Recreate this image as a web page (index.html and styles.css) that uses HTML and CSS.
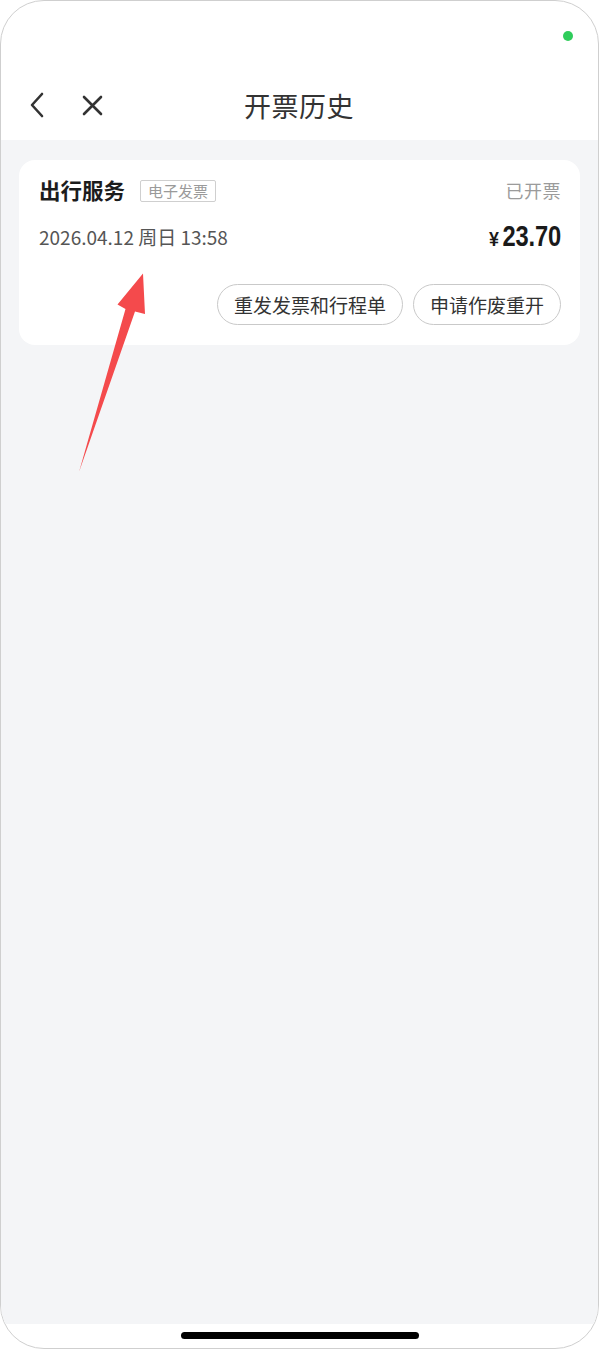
FILE: index.html
```html
<!DOCTYPE html>
<html lang="zh-CN">
<head>
<meta charset="utf-8">
<title>开票历史</title>
<link rel="stylesheet" href="styles.css">
</head>
<body>
<div class="phone">
  <div class="status-bar">
    <span class="dot"></span>
  </div>
  <div class="nav-bar">
    <div class="nav-left">
      <svg class="icon" width="20" height="28" viewBox="0 0 20 28"><path d="M15 3 L5 14 L15 25" fill="none" stroke="#333" stroke-width="2.6" stroke-linecap="round" stroke-linejoin="round"/></svg>
      <svg class="icon close" width="21" height="21" viewBox="0 0 21 21"><path d="M2 2 L19 19 M19 2 L2 19" fill="none" stroke="#333" stroke-width="2.6" stroke-linecap="round"/></svg>
    </div>
    <div class="nav-title">开票历史</div>
  </div>
  <main class="content">
    <section class="card">
      <div class="row row-top">
        <div class="title-wrap">
          <span class="card-title">出行服务</span>
          <span class="tag">电子发票</span>
        </div>
        <span class="status">已开票</span>
      </div>
      <div class="row row-mid">
        <span class="date">2026.04.12 周日 13:58</span>
        <span class="price"><span class="yen">¥</span><span class="amount">23.70</span></span>
      </div>
      <div class="actions">
        <button class="pill">重发发票和行程单</button>
        <button class="pill">申请作废重开</button>
      </div>
    </section>
  </main>
  <div class="home-area"><span class="home-bar"></span></div>
  <svg class="arrow" width="600" height="500" viewBox="0 0 600 500">
    <polygon points="78,471 124.5,308 116.5,303.5 142,272.5 144,313 134,310.5" fill="#f44a4c"/>
  </svg>
</div>
</body>
</html>
```
FILE: styles.css
```css
* { box-sizing: border-box; }
html, body {
  margin: 0;
  padding: 0;
  background: #ffffff;
}
body {
  font-family: "Noto Sans CJK SC", "Noto Sans", sans-serif;
  color: #222;
}
.phone {
  position: relative;
  width: 599px;
  height: 1349px;
  border: 1px solid #cfcfcf;
  border-radius: 44px;
  overflow: hidden;
  background: #fff;
  display: flex;
  flex-direction: column;
}
.status-bar {
  height: 69px;
  display: flex;
  justify-content: flex-end;
  padding: 30px 25px 0 0;
}
.dot {
  width: 10px;
  height: 10px;
  border-radius: 50%;
  background: #2fcc5b;
}
.nav-bar {
  height: 70px;
  display: flex;
  align-items: center;
  justify-content: center;
  position: relative;
}
.nav-left {
  position: absolute;
  left: 26px;
  top: 0;
  height: 70px;
  display: flex;
  align-items: center;
  gap: 35px;
}
.icon { display: block; }
.close { margin-top: 1px; }
.nav-title {
  font-size: 27px;
  color: #333;
  letter-spacing: 0.5px;
  line-height: 1;
  margin-right: 1px;
}
.content {
  flex: 1;
  background: #f4f5f7;
  padding: 20px 18px 0 18px;
}
.card {
  background: #fff;
  border-radius: 16px;
  padding: 16px 19px 20px 20px;
}
.row {
  display: flex;
  justify-content: space-between;
  align-items: center;
}
.row-top { height: 28px; }
.title-wrap {
  display: flex;
  align-items: center;
  gap: 15px;
}
.card-title {
  font-size: 21.5px;
  font-weight: 700;
  color: #1c1c1c;
  line-height: 28px;
}
.tag {
  font-size: 15px;
  color: #9a9a9a;
  border: 1px solid #cfcfcf;
  border-radius: 2px;
  padding: 0 7px;
  height: 22px;
  display: flex;
  align-items: center;
  margin-top: 1px;
}
.status {
  font-size: 18px;
  color: #9b9b9b;
  line-height: 28px;
  letter-spacing: 0.5px;
}
.row-mid {
  margin-top: 14px;
  height: 36px;
}
.date {
  font-size: 19px;
  color: #555;
}
.price {
  display: flex;
  align-items: baseline;
  color: #1a1a1a;
  font-weight: 700;
}
.yen {
  font-family: "Liberation Sans", sans-serif;
  font-size: 21px;
  display: inline-block;
  transform: scaleX(0.85);
  margin-right: 3px;
}
.amount {
  font-family: "Liberation Sans", sans-serif;
  font-size: 30px;
  display: inline-block;
  transform: scaleX(0.79);
  transform-origin: right center;
  margin-left: -16px;
  letter-spacing: -0.2px;
}
.actions {
  display: flex;
  justify-content: flex-end;
  gap: 10px;
  margin-top: 30px;
}
.pill {
  font-family: "Noto Sans CJK SC", sans-serif;
  font-size: 19px;
  color: #333;
  background: #fff;
  border: 1px solid #c9c9c9;
  border-radius: 21px;
  height: 41px;
  padding: 0 16px;
  line-height: 1;
}
.home-area {
  height: 24px;
  display: flex;
  justify-content: center;
  padding-top: 8px;
}
.home-bar {
  width: 238px;
  height: 7px;
  border-radius: 4px;
  background: #000;
}
.arrow {
  position: absolute;
  left: 0;
  top: 0;
  pointer-events: none;
}
```
